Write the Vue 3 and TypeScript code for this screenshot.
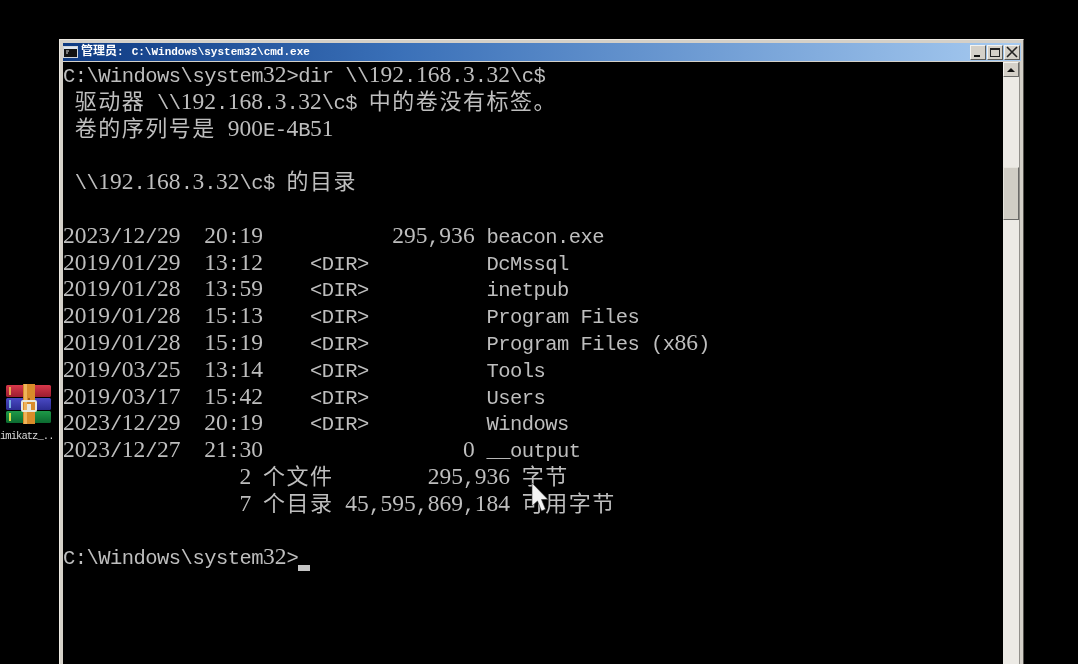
<script setup lang="ts">
type Kind = 'cjk' | 'num' | 'lat'
interface Seg { text: string; kind: Kind }

const lines: string[] = [
  'C:\\Windows\\system32>dir \\\\192.168.3.32\\c$',
  ' 驱动器 \\\\192.168.3.32\\c$ 中的卷没有标签。',
  ' 卷的序列号是 900E-4B51',
  '',
  ' \\\\192.168.3.32\\c$ 的目录',
  '',
  '2023/12/29  20:19           295,936 beacon.exe',
  '2019/01/29  13:12    <DIR>          DcMssql',
  '2019/01/28  13:59    <DIR>          inetpub',
  '2019/01/28  15:13    <DIR>          Program Files',
  '2019/01/28  15:19    <DIR>          Program Files (x86)',
  '2019/03/25  13:14    <DIR>          Tools',
  '2019/03/17  15:42    <DIR>          Users',
  '2023/12/29  20:19    <DIR>          Windows',
  '2023/12/27  21:30                 0 __output',
  '               2 个文件        295,936 字节',
  '               7 个目录 45,595,869,184 可用字节',
  '',
  'C:\\Windows\\system32>'
]

function kindOf(text: string): Kind {
  if (/[\u3000-\u9fff]/.test(text)) return 'cjk'
  return /\d/.test(text) ? 'num' : 'lat'
}

function split(line: string): Seg[] {
  const parts = line.match(/[\u3000-\u9fff]+|\d+|[^\u3000-\u9fff\d]+/g) ?? []
  return parts.map((text) => ({ text, kind: kindOf(text) }))
}

const rows = lines.map((l, i) => ({ id: i, segs: split(l), last: i === lines.length - 1 }))
</script>

<template>
  <div class="desktop">
    <div class="shortcut">
      <svg class="rar" width="46" height="41" viewBox="0 0 46 41">
        <defs>
          <linearGradient id="red" x1="0" y1="0" x2="0" y2="1">
            <stop offset="0" stop-color="#d8384a" /><stop offset="1" stop-color="#9c1c30" />
          </linearGradient>
          <linearGradient id="blue" x1="0" y1="0" x2="0" y2="1">
            <stop offset="0" stop-color="#4a4ac4" /><stop offset="1" stop-color="#2c2c92" />
          </linearGradient>
          <linearGradient id="green" x1="0" y1="0" x2="0" y2="1">
            <stop offset="0" stop-color="#1e9a48" /><stop offset="1" stop-color="#0c6a30" />
          </linearGradient>
        </defs>
        <rect x="0" y="1" width="45" height="12" rx="1.5" fill="url(#red)" />
        <rect x="0" y="14" width="45" height="12" rx="1.5" fill="url(#blue)" />
        <rect x="0" y="27" width="45" height="12" rx="1.5" fill="url(#green)" />
        <rect x="3" y="3" width="2" height="8" fill="#e8a850" />
        <rect x="3" y="16" width="2" height="8" fill="#78b0e0" />
        <rect x="3" y="29" width="2" height="8" fill="#d8e04a" />
        <rect x="17" y="0" width="12" height="40" fill="#d98c2a" />
        <rect x="18" y="0" width="3" height="40" fill="#efb45a" />
        <circle cx="23" cy="15" r="1" fill="#8a4a10" />
        <rect x="16" y="17" width="14" height="10" rx="1" fill="none" stroke="#e8e8de" stroke-width="2" />
        <rect x="21" y="20" width="4" height="7" fill="#e8e8de" />
      </svg>
      <span class="shortcut-label">imikatz_..</span>
    </div>

    <section class="window">
      <header class="titlebar">
        <svg class="app-icon" width="15" height="12" viewBox="0 0 15 12">
          <rect x="0.5" y="0.5" width="14" height="11" fill="#111" stroke="#cfd4da" />
          <rect x="1" y="1" width="13" height="2" fill="#dfe6ef" />
          <path d="M3 5h3M3 7h2" stroke="#ddd" stroke-width="1" />
        </svg>
        <span class="title"><span class="title-cjk">管理员</span><span class="title-colon">:</span>C:\Windows\system32\cmd.exe</span>
        <div class="controls">
          <button class="ctl" aria-label="最小化"><i class="min"></i></button>
          <button class="ctl" aria-label="最大化"><i class="max"></i></button>
          <button class="ctl" aria-label="关闭">
            <svg width="12" height="12" viewBox="0 0 12 12"><path d="M1 1l10 10M11 1L1 11" stroke="#222" stroke-width="1.6" /></svg>
          </button>
        </div>
      </header>

      <div class="client">
        <div class="console">
          <div v-for="row in rows" :key="row.id" class="line">
            <span v-for="(s, j) in row.segs" :key="j" :class="s.kind">{{ s.text }}</span>
            <span v-if="row.last" class="cursor"></span>
          </div>
        </div>
        <aside class="scrollbar">
          <div class="arrow"><i></i></div>
          <div class="track">
            <div class="thumb"></div>
          </div>
        </aside>
      </div>
    </section>

    <svg class="pointer" width="18" height="32" viewBox="0 0 18 32">
      <path d="M1 1v23l5.5-5 4 10 4-1.8-4-9.7H17z" fill="#f4f4f4" stroke="#333" stroke-width="0.6" />
    </svg>
  </div>
</template>

<style>
html, body { margin: 0; background: #000; }
</style>

<style scoped>
.desktop {
  position: relative;
  width: 1078px;
  height: 664px;
  overflow: hidden;
  background: #000;
}
.shortcut {
  position: absolute;
  left: 0;
  top: 384px;
  width: 56px;
  display: flex;
  flex-direction: column;
  align-items: flex-start;
}
.rar { margin-left: 6px; }
.shortcut-label {
  margin-top: 4px;
  font: 10.5px/14px "Liberation Mono", monospace;
  letter-spacing: -0.95px;
  color: #d8d8d8;
  white-space: pre;
  filter: blur(0.3px);
}
.window {
  position: absolute;
  left: 59px;
  top: 39px;
  width: 965px;
  height: 640px;
  box-sizing: border-box;
  padding: 3px 2px 0 3px;
  background: #d4d0c8;
  border-top: 1px solid #ece9e2;
  border-left: 1px solid #ece9e2;
  border-right: 1px solid #55534e;
  display: flex;
  flex-direction: column;
}
.titlebar {
  height: 18px;
  flex: none;
  display: flex;
  align-items: center;
  padding: 0 1px 0 0;
  gap: 3px;
  background: linear-gradient(90deg, #0e3a82 0%, #3a70b8 35%, #a6caf0 100%);
  margin-bottom: 1px;
}
.title {
  font: bold 11px/16px "Liberation Mono", monospace;
  color: #fff;
  white-space: pre;
  margin-top: -2px;
  filter: blur(0.25px);
}
.title-cjk {
  font: bold 12px/16px "Noto Sans CJK SC", sans-serif;
}
.title-colon {
  margin-right: 8px;
}
.controls {
  margin-left: auto;
  display: flex;
  gap: 1px;
}
.ctl {
  width: 16px;
  height: 15px;
  padding: 0;
  background: #d4d0c8;
  border: 1px solid;
  border-color: #f4f3ef #5a5a58 #5a5a58 #f4f3ef;
  display: flex;
  align-items: center;
  justify-content: center;
  position: relative;
}
.min {
  position: absolute;
  left: 3px;
  bottom: 2px;
  width: 6px;
  height: 2px;
  background: #111;
}
.max {
  width: 10px;
  height: 9px;
  box-sizing: border-box;
  border: 1px solid #222;
  border-top-width: 2px;
}
.client {
  flex: 1;
  display: flex;
  min-height: 0;
}
.console {
  flex: 1;
  min-width: 0;
  background: #000;
  color: #bebebe;
  filter: blur(0.3px);
}
.line {
  height: 26.8px;
  font: 23.52px/24px "Liberation Serif", serif;
  white-space: pre;
}
.num {
  line-height: 0;
}
.lat {
  font: 20.5px/0 "Liberation Mono", monospace;
  letter-spacing: -0.54px;
}
.cjk {
  font: 22px/0 "Noto Sans CJK SC", sans-serif;
  letter-spacing: 1.52px;
}
.cursor {
  display: inline-block;
  width: 12px;
  height: 6px;
  background: #c4c4c4;
  vertical-align: -6.5px;
  line-height: 0;
}
.scrollbar {
  width: 16px;
  flex: none;
  display: flex;
  flex-direction: column;
  background: #eceae5;
  border-right: 1px solid #918f8a;
  margin-right: 1px;
}
.arrow {
  height: 15px;
  flex: none;
  box-sizing: border-box;
  background: #d4d0c8;
  border: 1px solid;
  border-color: #f4f3ef #6a6a68 #6a6a68 #f4f3ef;
  display: flex;
  align-items: center;
  justify-content: center;
}
.arrow i {
  width: 0;
  height: 0;
  border-left: 4px solid transparent;
  border-right: 4px solid transparent;
  border-bottom: 4px solid #111;
}
.track {
  flex: 1;
  padding-top: 90px;
}
.thumb {
  height: 53px;
  box-sizing: border-box;
  background: #d0cdc5;
  border: 1px solid;
  border-color: #e6e4dd #6a6a68 #6a6a68 #e6e4dd;
}
.pointer {
  position: absolute;
  left: 531px;
  top: 482px;
}
</style>
